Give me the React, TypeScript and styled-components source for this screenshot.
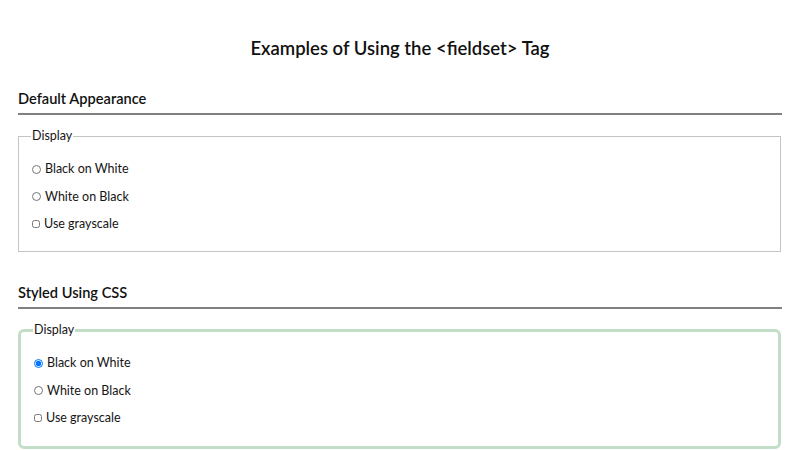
import { createGlobalStyle, styled } from 'styled-components';

const GlobalStyle = createGlobalStyle`
  html, body {
    margin: 0;
    padding: 0;
    background: #ffffff;
  }
  body {
    font-family: Lato, 'Open Sans', sans-serif;
    color: #151515;
  }
`;

interface IOption {
  id: string;
  type: 'radio' | 'checkbox';
  text: string;
}

const OPTIONS: IOption[] = [
  { id: 'bow', type: 'radio', text: 'Black on White' },
  { id: 'wob', type: 'radio', text: 'White on Black' },
  { id: 'gray', type: 'checkbox', text: 'Use grayscale' },
];

const DisplayFields = ({ styledSet, name }: { styledSet?: boolean; name: string }) => (
  <Fieldset $styled={styledSet}>
    <Legend>Display</Legend>
    {OPTIONS.map((opt) => (
      <Row key={opt.id}>
        <Control
          type={opt.type}
          name={opt.type === 'radio' ? name : undefined}
          defaultChecked={styledSet && opt.id === 'bow'}
          $check={opt.type === 'checkbox'}
        />
        {opt.text}
      </Row>
    ))}
  </Fieldset>
);

const App = () => {
  return (
    <Page>
      <GlobalStyle />
      <Title>Examples of Using the &lt;fieldset&gt; Tag</Title>
      <Section>
        <Heading>Default Appearance</Heading>
        <DisplayFields name="display1" />
      </Section>
      <Section $gap={31}>
        <Heading>Styled Using CSS</Heading>
        <DisplayFields name="display2" styledSet />
      </Section>
    </Page>
  );
};

const Page = styled.main`
  padding: 0 18px;
  box-sizing: border-box;
  width: 800px;
`;

const Title = styled.h1`
  margin: 36px 0 0;
  font-size: 18.5px;
  line-height: 24px;
  font-weight: 600;
  text-align: center;
  color: #111;
`;

const Section = styled.section<{ $gap?: number }>`
  margin-top: ${({ $gap }) => $gap ?? 29}px;
  display: flex;
  flex-direction: column;
  gap: 13px;
`;

const Heading = styled.h2`
  margin: 0;
  font-size: 14.6px;
  line-height: 20px;
  font-weight: 600;
  padding-bottom: 4px;
  border-bottom: 2px solid #808080;
  color: #111;
`;

const Fieldset = styled.fieldset<{ $styled?: boolean }>`
  margin: 0 1px 0 0;
  padding: 17px 12px 19px;
  border: 1px solid #c4c4c4;
  display: flex;
  flex-direction: column;
  gap: 11.5px;
  ${({ $styled }) =>
    $styled &&
    `
    border: 3px solid #c3dec6;
    border-radius: 6px;
    padding: 17px 11px 20px 12px;
  `}
`;

const Legend = styled.legend`
  padding: 0 1px;
  font-size: 12.5px;
  line-height: 16px;
`;

const Row = styled.label`
  display: flex;
  align-items: center;
  font-size: 12.5px;
  line-height: 16px;
  height: 16px;
`;

const Control = styled.input<{ $check?: boolean }>`
  width: ${({ $check }) => ($check ? '8px' : '9px')};
  height: ${({ $check }) => ($check ? '8px' : '9px')};
  margin: 0 4px 0 1px;
`;

export default App;
